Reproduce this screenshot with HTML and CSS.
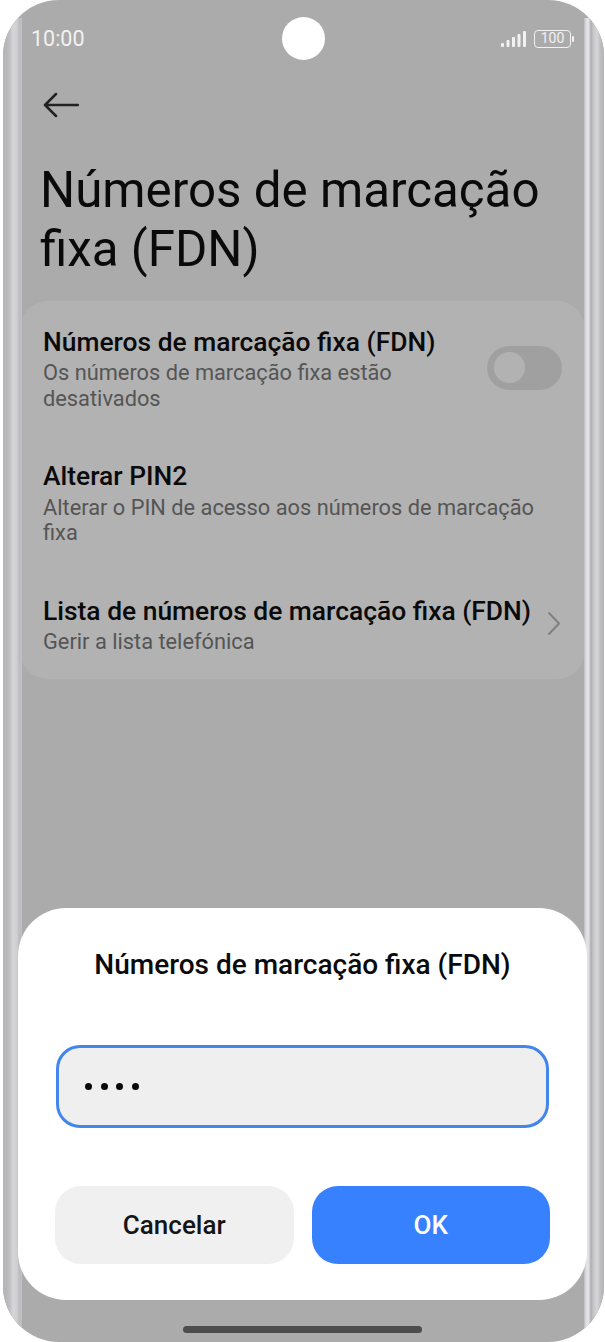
FILE: index.html
```html
<!DOCTYPE html>
<html lang="pt">
<head>
  <meta charset="UTF-8" />
  <title>Números de marcação fixa (FDN)</title>
  <link rel="stylesheet" href="styles.css">
</head>
<body>
  <div class="phone">
    <!-- curved glass edges -->
    <div class="edge edge-left"></div>
    <div class="edge edge-right"></div>

    <div class="status-bar">
      <span class="clock">10:00</span>
      <span class="camera"></span>
      <span class="status-icons">
        <svg class="signal" width="26" height="16" viewBox="0 0 26 16">
          <rect x="0" y="12" width="3" height="4" rx="1" />
          <rect x="5.500" y="9" width="3" height="7" rx="1" />
          <rect x="11" y="6" width="3" height="10" rx="1" />
          <rect x="16.500" y="3" width="3" height="13" rx="1" />
          <rect x="22" y="0" width="3" height="16" rx="1" />
        </svg>
        <span class="battery">100</span>
        <span class="battery-tip"></span>
      </span>
    </div>

    <div class="back">
      <svg width="36" height="26" viewBox="0 0 36 26" fill="none" stroke="#222" stroke-width="2.500" stroke-linecap="round" stroke-linejoin="round">
        <path d="M2 13H35M13 2L2 13L13 24" />
      </svg>
    </div>

    <h1 class="title">Números de marcação fixa (FDN)</h1>

    <div class="card">
      <div class="row row-toggle">
        <div class="row-text">
          <div class="row-title">Números de marcação fixa (FDN)</div>
          <div class="row-sub">Os números de marcação fixa estão desativados</div>
        </div>
        <span class="toggle"><span class="knob"></span></span>
      </div>
      <div class="row">
        <div class="row-text">
          <div class="row-title">Alterar PIN2</div>
          <div class="row-sub">Alterar o PIN de acesso aos números de marcação fixa</div>
        </div>
      </div>
      <div class="row row-link">
        <div class="row-text">
          <div class="row-title">Lista de números de marcação fixa (FDN)</div>
          <div class="row-sub">Gerir a lista telefónica</div>
        </div>
        <svg class="chevron" width="14" height="25" viewBox="0 0 14 25" fill="none" stroke="#808080" stroke-width="2" stroke-linecap="round" stroke-linejoin="round">
          <path d="M2 2L12 12.500L2 23" />
        </svg>
      </div>
    </div>

    <!-- bottom sheet over the dimmed page -->
    <div class="sheet">
      <div class="sheet-title">Números de marcação fixa (FDN)</div>
      <div class="field">
        <span class="dot"></span><span class="dot"></span><span class="dot"></span><span class="dot"></span>
      </div>
      <div class="buttons">
        <div class="btn btn-cancel">Cancelar</div>
        <div class="btn btn-ok">OK</div>
      </div>
    </div>

    <div class="home-bar"></div>
  </div>
</body>
</html>
```

FILE: styles.css
```css
html, body {
  margin: 0;
  padding: 0;
  width: 605px;
  height: 1342px;
  overflow: hidden;
  background-color: #fff;
}

.phone {
  position: relative;
  box-sizing: border-box;
  width: 601px;
  height: 1342px;
  margin-left: 3px;
  padding-top: 25px;
  overflow: hidden;
  border-radius: 56px;
  background-color: #ababab;
  font-family: Roboto, sans-serif;
}

/* ---------- curved edges ---------- */
.edge {
  position: absolute;
  top: 18px;
  bottom: 12px;
}
.edge-left {
  left: 0;
  width: 19px;
  background: linear-gradient(90deg, #b4b4b6 0, #bcbcbe 6px, #d6d6d8 10px, #cfcfd1 14px, #bdbdbf 16px, #c0c0c2 19px);
}
.edge-right {
  right: 0;
  width: 20px;
  background: linear-gradient(90deg, #bdbdbd 0, #e6e6e8 3px, #dcdcde 5px, #aeaeb2 7px, #c4c4c6 9px, #d6d6d8 13px, #bbbbbd 17px, #b5b5b7 20px);
}

/* ---------- status bar ---------- */
.status-bar {
  position: relative;
  display: flex;
  align-items: center;
  justify-content: space-between;
  height: 27px;
  padding: 0 30px 0 28px;
}
.clock {
  font-size: 21.500px;
  color: #f2f2f2;
}
.camera {
  position: absolute;
  left: 279px;
  top: -8px;
  width: 43px;
  height: 43px;
  border-radius: 50%;
  background-color: #fff;
}
.status-icons {
  display: flex;
  align-items: center;
}
.signal {
  fill: #f2f2f2;
  margin-right: 7px;
}
.battery {
  box-sizing: border-box;
  width: 37px;
  height: 18px;
  border: 1.500px solid #f2f2f2;
  border-radius: 4px;
  font-size: 14px;
  line-height: 15px;
  text-align: center;
  color: #f2f2f2;
}
.battery-tip {
  width: 2px;
  height: 6px;
  margin-left: 1px;
  border-radius: 1px;
  background-color: #f2f2f2;
}

/* ---------- page content ---------- */
.back {
  height: 26px;
  margin-top: 40px;
  margin-left: 40px;
}
.title {
  margin: 43px 40px 0 37px;
  font-size: 49.300px;
  font-weight: 400;
  line-height: 59px;
  color: #0a0a0a;
}

.card {
  margin: 22px 19px 0 17px;
  padding: 22.750px 0 24.250px 0;
  border-radius: 28px;
  background-color: #b2b2b2;
}
.row {
  display: flex;
  align-items: center;
  justify-content: space-between;
  padding: 0 22px 0 23px;
  margin-bottom: 47px;
}
.row:last-child {
  margin-bottom: 0;
}
.row-text {
  flex: 1;
}
.row-title {
  font-size: 26.400px;
  font-weight: 480;
  line-height: 36.500px;
  color: #0a0a0a;
}
.row-sub {
  font-size: 21.800px;
  line-height: 25.500px;
  color: #555;
}
.row-toggle .row-text {
  padding-right: 40px;
}
.row-link .chevron {
  margin-left: 12px;
  margin-right: 2px;
}
.toggle {
  display: flex;
  align-items: center;
  width: 75px;
  height: 44px;
  margin-right: 1px;
  padding-left: 7px;
  box-sizing: border-box;
  border-radius: 22px;
  background-color: #a0a0a0;
}
.knob {
  width: 31px;
  height: 31px;
  border-radius: 50%;
  background-color: #b2b2b2;
}

/* ---------- bottom sheet ---------- */
.sheet {
  position: absolute;
  left: 15px;
  right: 17px;
  top: 908px;
  box-sizing: border-box;
  height: 392px;
  padding: 42px 37px 0 37px;
  border-radius: 48px;
  background-color: #fff;
}
.sheet-title {
  font-size: 28px;
  font-weight: 480;
  line-height: 30px;
  text-align: center;
  color: #0a0a0a;
}
.field {
  display: flex;
  align-items: center;
  gap: 8.700px;
  box-sizing: border-box;
  height: 83px;
  margin: 65px 1px 0 1px;
  padding-left: 26px;
  border: 3px solid #4285ec;
  border-radius: 24px;
  background-color: #efefef;
}
.dot {
  width: 7px;
  height: 7px;
  border-radius: 50%;
  background-color: #0a0a0a;
}
.buttons {
  display: flex;
  gap: 18px;
  margin-top: 58px;
}
.btn {
  flex: 1;
  height: 78px;
  border-radius: 26px;
  font-size: 26px;
  font-weight: 480;
  line-height: 78px;
  text-align: center;
}
.btn-cancel {
  background-color: #f0f0f0;
  color: #151515;
}
.btn-ok {
  background-color: #3781ff;
  color: #fff;
}

.home-bar {
  position: absolute;
  left: 180px;
  bottom: 9px;
  width: 239px;
  height: 7px;
  border-radius: 4px;
  background-color: #4d4d4d;
}
```
